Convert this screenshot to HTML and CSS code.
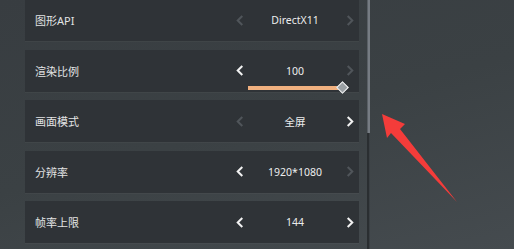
FILE: index.html
```html
<!DOCTYPE html>
<html>
<head>
<meta charset="utf-8">
<link rel="stylesheet" href="styles.css">
</head>
<body>
<div class="screen">
  <div class="list">
    <div class="row">
      <span class="label">图形API</span>
      <div class="ctrl">
        <svg class="chev dim" viewBox="0 0 8 12"><polyline points="6.5,1 1.5,6 6.5,11"/></svg>
        <span class="value">DirectX11</span>
        <svg class="chev dim" viewBox="0 0 8 12"><polyline points="1.5,1 6.5,6 1.5,11"/></svg>
      </div>
    </div>
    <div class="row">
      <span class="label">渲染比例</span>
      <div class="ctrl">
        <svg class="chev" viewBox="0 0 8 12"><polyline points="6.5,1 1.5,6 6.5,11"/></svg>
        <span class="value slider-cell">100<span class="bar"></span><span class="knob"></span></span>
        <svg class="chev dim" viewBox="0 0 8 12"><polyline points="1.5,1 6.5,6 1.5,11"/></svg>
      </div>
    </div>
    <div class="row">
      <span class="label">画面模式</span>
      <div class="ctrl">
        <svg class="chev dim" viewBox="0 0 8 12"><polyline points="6.5,1 1.5,6 6.5,11"/></svg>
        <span class="value">全屏</span>
        <svg class="chev" viewBox="0 0 8 12"><polyline points="1.5,1 6.5,6 1.5,11"/></svg>
      </div>
    </div>
    <div class="row">
      <span class="label">分辨率</span>
      <div class="ctrl">
        <svg class="chev" viewBox="0 0 8 12"><polyline points="6.5,1 1.5,6 6.5,11"/></svg>
        <span class="value">1920*1080</span>
        <svg class="chev dim" viewBox="0 0 8 12"><polyline points="1.5,1 6.5,6 1.5,11"/></svg>
      </div>
    </div>
    <div class="row">
      <span class="label">帧率上限</span>
      <div class="ctrl">
        <svg class="chev" viewBox="0 0 8 12"><polyline points="6.5,1 1.5,6 6.5,11"/></svg>
        <span class="value">144</span>
        <svg class="chev" viewBox="0 0 8 12"><polyline points="1.5,1 6.5,6 1.5,11"/></svg>
      </div>
    </div>
  </div>
  <div class="scrollbar"><div class="thumb"></div></div>
  <svg class="pointer" width="514" height="249" viewBox="0 0 514 249">
    <polygon points="382,114 405,124 400,129 457,202 391,133 387,138" fill="#f43c3a"/>
  </svg>
</div>
</body>
</html>
```
FILE: styles.css
```css
html, body {
  margin: 0;
  padding: 0;
}
body {
  width: 514px;
  height: 249px;
  overflow: hidden;
  font-family: "Noto Sans", "Noto Sans CJK SC", sans-serif;
}
.screen {
  position: relative;
  width: 514px;
  height: 249px;
  display: flex;
  background: linear-gradient(165deg, #383d41 0%, #3b4144 50%, #454b4f 100%);
}
.list {
  margin: -1px 0 0 25px;
  width: 334px;
  display: flex;
  flex-direction: column;
  gap: 8.5px;
}
.row {
  height: 42px;
  flex: none;
  display: flex;
  align-items: center;
  padding: 0 2px 0 10px;
  background: #2f3337;
  box-shadow: 0 1px 0 rgba(255,255,255,0.03);
}
.label {
  flex: 1;
  color: #e2e3e4;
  font-size: 11px;
}
.ctrl {
  width: 124px;
  display: grid;
  grid-template-columns: 14px 1fr 14px;
  align-items: center;
  justify-items: center;
}
.chev {
  width: 8px;
  height: 11px;
  fill: none;
  stroke: #f2f2f2;
  stroke-width: 2.2;
}
.chev.dim {
  stroke: #50555a;
}
.value {
  color: #eceded;
  font-size: 10.5px;
  position: relative;
}
.slider-cell {
  justify-self: stretch;
  text-align: center;
}
.bar {
  position: absolute;
  left: 1px;
  right: 0;
  top: 22px;
  height: 4px;
  background: #f0b07f;
}
.knob {
  position: absolute;
  right: -4px;
  top: 19px;
  width: 7px;
  height: 7px;
  transform: rotate(45deg);
  background: #9aa0a4;
  border: 1px solid #f4f4f4;
}
.scrollbar {
  position: relative;
  margin-left: 8px;
  width: 3px;
  height: 249px;
  background: linear-gradient(90deg, #2a2e31 0, #2a2e31 2px, #3a3f43 2px);
}
.thumb {
  width: 3px;
  height: 133px;
  background: #767c83;
  border-left: 1px solid #5a6066;
  box-sizing: border-box;
}
.pointer {
  position: absolute;
  left: 0;
  top: 0;
}
```
